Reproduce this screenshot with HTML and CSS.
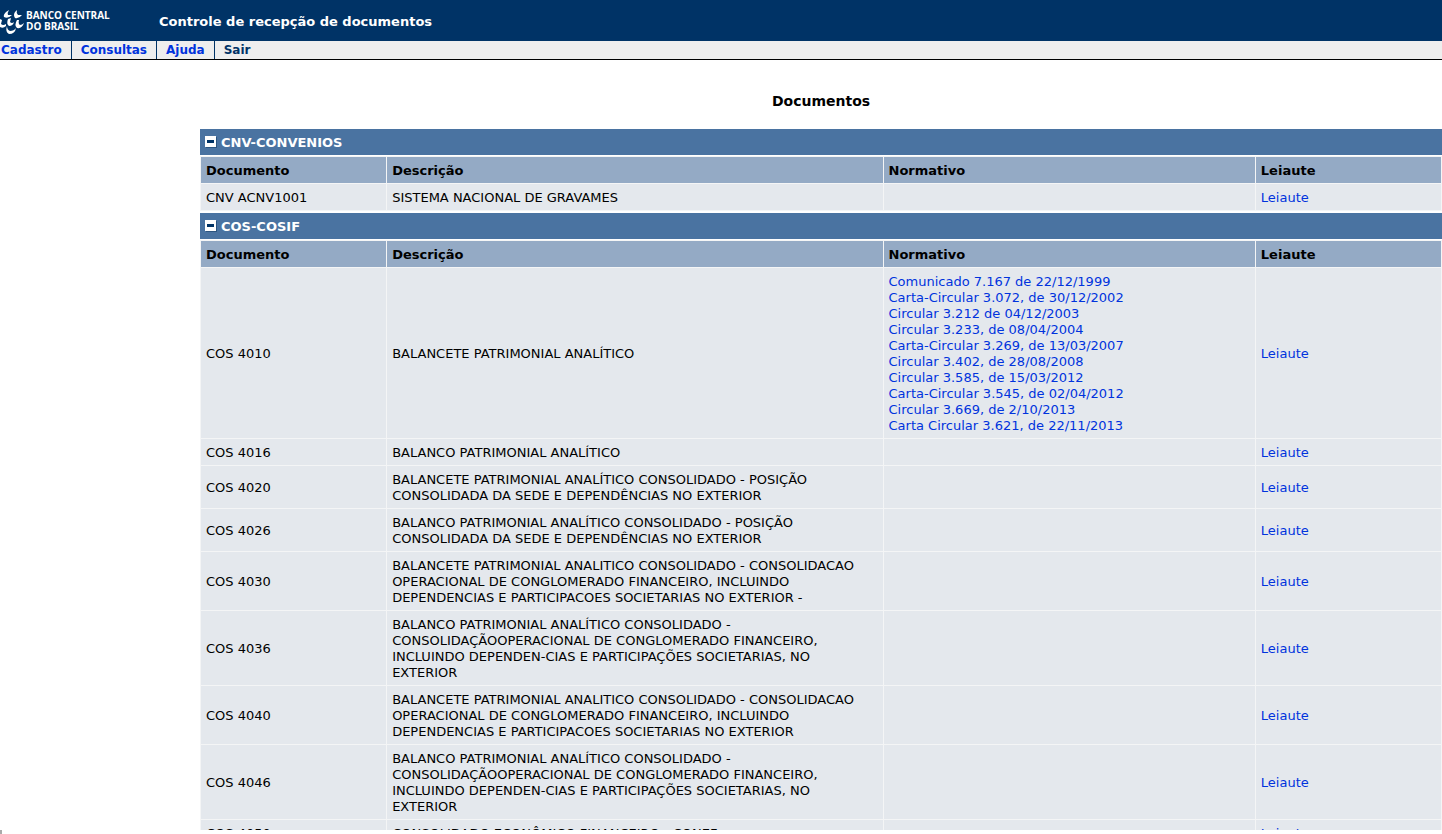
FILE: index.html
```html
<!DOCTYPE html>
<html lang="pt-BR">
<head>
<meta charset="utf-8">
<title>Controle de recepção de documentos</title>
<link rel="stylesheet" href="styles.css">
</head>
<body>
<div class="page">
  <header class="header">
    <div class="brand">
      <svg class="brand-mark" viewBox="0 0 24 26" width="24" height="26" fill="#fff" aria-hidden="true">
        <path d="M9 2L6 4Q3 7 4 9Q8 11 12 7L8 7Q7 5 9 2Z"/>
        <path d="M17 2L15 4Q13 7 15 10Q19 11 22 7L18 7Q16 5 17 2Z"/>
        <path d="M0 11L2 12L1 16Q3 18 6 16L6 18Q3 21 0 19Z"/>
        <path d="M8 11L11 10L10 14Q12 16 14 14Q13 18 9 18Q6 16 8 11Z"/>
        <path d="M7 18Q7 22 10 23Q14 23 16 20Q15 26 9 26Q5 24 7 18Z"/>
        <path d="M17 12L19 12Q18 16 20 17Q22 17 24 15Q22 21 17 20Q14 17 17 12Z"/>
      </svg>
      <div class="brand-name">BANCO CENTRAL<br>DO BRASIL</div>
    </div>
    <div class="app-name">Controle de recepção de documentos</div>
  </header>
  <nav class="menu">
    <a class="menu-item" href="#">Cadastro</a>
    <a class="menu-item" href="#">Consultas</a>
    <a class="menu-item" href="#">Ajuda</a>
    <a class="menu-item menu-exit" href="#">Sair</a>
  </nav>
  <main class="content">
    <h1 class="title">Documentos</h1>
    <section class="group">
      <h2 class="group-title"><button class="toggle" type="button" aria-label="Recolher CNV-CONVENIOS"></button>CNV-CONVENIOS</h2>
      <table class="docs">
        <thead><tr><th class="col-doc">Documento</th><th class="col-desc">Descrição</th><th class="col-norm">Normativo</th><th class="col-lay">Leiaute</th></tr></thead>
        <tbody>
          <tr><td>CNV ACNV1001</td><td>SISTEMA NACIONAL DE GRAVAMES</td><td></td><td><a href="#">Leiaute</a></td></tr>
        </tbody>
      </table>
    </section>
    <section class="group">
      <h2 class="group-title"><button class="toggle" type="button" aria-label="Recolher COS-COSIF"></button>COS-COSIF</h2>
      <table class="docs">
        <thead><tr><th class="col-doc">Documento</th><th class="col-desc">Descrição</th><th class="col-norm">Normativo</th><th class="col-lay">Leiaute</th></tr></thead>
        <tbody>
          <tr><td>COS 4010</td><td>BALANCETE PATRIMONIAL ANALÍTICO</td><td>
            <a href="#">Comunicado 7.167 de 22/12/1999</a><br>
            <a href="#">Carta-Circular 3.072, de 30/12/2002</a><br>
            <a href="#">Circular 3.212 de 04/12/2003</a><br>
            <a href="#">Circular 3.233, de 08/04/2004</a><br>
            <a href="#">Carta-Circular 3.269, de 13/03/2007</a><br>
            <a href="#">Circular 3.402, de 28/08/2008</a><br>
            <a href="#">Circular 3.585, de 15/03/2012</a><br>
            <a href="#">Carta-Circular 3.545, de 02/04/2012</a><br>
            <a href="#">Circular 3.669, de 2/10/2013</a><br>
            <a href="#">Carta Circular 3.621, de 22/11/2013</a>
          </td><td><a href="#">Leiaute</a></td></tr>
          <tr><td>COS 4016</td><td>BALANCO PATRIMONIAL ANALÍTICO</td><td></td><td><a href="#">Leiaute</a></td></tr>
          <tr><td>COS 4020</td><td>BALANCETE PATRIMONIAL ANALÍTICO CONSOLIDADO - POSIÇÃO CONSOLIDADA DA SEDE E DEPENDÊNCIAS NO EXTERIOR</td><td></td><td><a href="#">Leiaute</a></td></tr>
          <tr><td>COS 4026</td><td>BALANCO PATRIMONIAL ANALÍTICO CONSOLIDADO - POSIÇÃO CONSOLIDADA DA SEDE E DEPENDÊNCIAS NO EXTERIOR</td><td></td><td><a href="#">Leiaute</a></td></tr>
          <tr><td>COS 4030</td><td>BALANCETE PATRIMONIAL ANALITICO CONSOLIDADO - CONSOLIDACAO OPERACIONAL DE CONGLOMERADO FINANCEIRO, INCLUINDO DEPENDENCIAS E PARTICIPACOES SOCIETARIAS NO EXTERIOR -</td><td></td><td><a href="#">Leiaute</a></td></tr>
          <tr><td>COS 4036</td><td>BALANCO PATRIMONIAL ANALÍTICO CONSOLIDADO - CONSOLIDAÇÃOOPERACIONAL DE CONGLOMERADO FINANCEIRO, INCLUINDO DEPENDEN-CIAS E PARTICIPAÇÕES SOCIETARIAS, NO EXTERIOR</td><td></td><td><a href="#">Leiaute</a></td></tr>
          <tr><td>COS 4040</td><td>BALANCETE PATRIMONIAL ANALITICO CONSOLIDADO - CONSOLIDACAO OPERACIONAL DE CONGLOMERADO FINANCEIRO, INCLUINDO DEPENDENCIAS E PARTICIPACOES SOCIETARIAS NO EXTERIOR</td><td></td><td><a href="#">Leiaute</a></td></tr>
          <tr><td>COS 4046</td><td>BALANCO PATRIMONIAL ANALÍTICO CONSOLIDADO - CONSOLIDAÇÃOOPERACIONAL DE CONGLOMERADO FINANCEIRO, INCLUINDO DEPENDEN-CIAS E PARTICIPAÇÕES SOCIETARIAS, NO EXTERIOR</td><td></td><td><a href="#">Leiaute</a></td></tr>
          <tr><td>COS 4050</td><td>CONSOLIDADO ECONÔMICO FINANCEIRO - CONEF</td><td></td><td><a href="#">Leiaute</a></td></tr>
        </tbody>
      </table>
    </section>
  </main>
  <div class="status"></div>
</div>
</body>
</html>
```

FILE: styles.css
```css
* { box-sizing: border-box; }
body {
  margin: 0;
  background: #fff;
  color: #000;
  font: 13px/16px Verdana, "DejaVu Sans", sans-serif;
}
a { color: #0033dd; text-decoration: none; }
.page {
  display: flex;
  flex-direction: column;
  height: 100vh;
  overflow: hidden;
}
.header {
  display: flex;
  flex: none;
  align-items: center;
  height: 41px;
  background: #003366;
  color: #fff;
  font-weight: bold;
}
.brand { display: flex; align-items: center; gap: 2px; width: 159px; }
.brand-name { font: bold 10px/11px "Open Sans", sans-serif; }
.app-name { padding-top: 2px; }
.menu {
  display: flex;
  flex: none;
  height: 19px;
  background: #eee;
  border-bottom: 1px solid #000;
  font-weight: bold;
  font-size: 12px;
  line-height: 18px;
}
.menu-item { padding: 0 9px; border-right: 1px solid #003366; }
.menu-item:first-child { padding-left: 1px; }
.menu-exit { color: #003366; border-right: 0; }
.content {
  flex: 1;
  min-height: 0;
  margin-left: 200px;
  padding-top: 32px;
  overflow: hidden;
}
.title { margin: 0 0 19px; font-size: 14px; line-height: 18px; text-align: center; }
.group { margin-bottom: 2px; }
.group-title {
  display: flex;
  align-items: center;
  gap: 5px;
  height: 26px;
  margin: 0 0 1px;
  padding: 2px 0 0 5px;
  background: #4a73a1;
  color: #fff;
  font-size: 13px;
}
.toggle {
  display: grid;
  place-items: center;
  width: 11px;
  height: 11px;
  margin: 0 0 4px;
  padding: 0;
  border: 0;
  background: #fff;
  box-shadow: 1px 1px #2c5580;
}
.toggle::before { content: ""; width: 7px; height: 3px; background: #003366; }
.docs {
  width: 100%;
  table-layout: fixed;
  border-collapse: separate;
  border-spacing: 0;
  border: solid #f4f5f6;
  border-width: 1px 0 0 1px;
  background: #e4e8ed;
}
.docs th, .docs td {
  height: 27px;
  padding: 6px 5px 4px;
  border: solid #f4f5f6;
  border-width: 0 1px 1px 0;
  text-align: left;
  vertical-align: middle;
}
.docs th { background: #94aac5; }
.col-doc, .col-lay { width: 15%; }
.col-desc { width: 40%; }
.col-norm { width: 30%; }
.status { flex: none; width: 2px; height: 4px; background: #aaa; }
```
